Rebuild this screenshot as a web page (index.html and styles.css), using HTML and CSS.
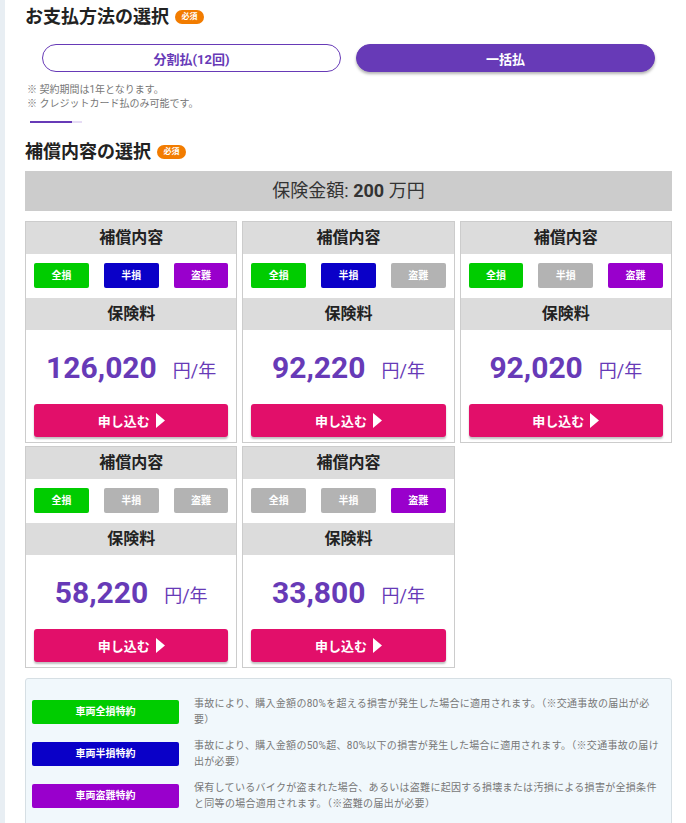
FILE: index.html
```html
<!DOCTYPE html>
<html lang="ja">
<head>
    <meta charset="UTF-8">
    <meta name="viewport" content="width=device-width, initial-scale=1.0">
    <title>お支払方法の選択</title>
    <link rel="stylesheet" href="styles.css">
</head>
<body>
    <div class="page">
        <div class="side"></div>

        <div class="main">
            <h2 class="section-title">お支払方法の選択 <span class="badge">必須</span></h2>

            <div class="pay-options">
                <button class="pay-button">分割払(12回)</button>
                <button class="pay-button active">一括払</button>
            </div>

            <div class="notes">
                <p>※ 契約期間は1年となります。</p>
                <p>※ クレジットカード払のみ可能です。</p>
            </div>

            <div class="progress"><span></span></div>

            <h2 class="section-title">補償内容の選択 <span class="badge">必須</span></h2>

            <div class="amount-bar">保険金額: <b>200</b> 万円</div>

            <div class="plans">
                <div class="plan">
                    <div class="plan-head">補償内容</div>
                    <div class="tags">
                        <span class="tag green">全損</span>
                        <span class="tag blue">半損</span>
                        <span class="tag purple">盗難</span>
                    </div>
                    <div class="plan-head">保険料</div>
                    <div class="price"><span class="num">126,020</span><span class="unit">円/年</span></div>
                    <button class="apply">申し込む <svg width="9" height="15" viewBox="0 0 9 15"><polygon points="0,0 9,7.5 0,15" fill="#fff"/></svg></button>
                </div>

                <div class="plan">
                    <div class="plan-head">補償内容</div>
                    <div class="tags">
                        <span class="tag green">全損</span>
                        <span class="tag blue">半損</span>
                        <span class="tag off">盗難</span>
                    </div>
                    <div class="plan-head">保険料</div>
                    <div class="price"><span class="num">92,220</span><span class="unit">円/年</span></div>
                    <button class="apply">申し込む <svg width="9" height="15" viewBox="0 0 9 15"><polygon points="0,0 9,7.5 0,15" fill="#fff"/></svg></button>
                </div>

                <div class="plan">
                    <div class="plan-head">補償内容</div>
                    <div class="tags">
                        <span class="tag green">全損</span>
                        <span class="tag off">半損</span>
                        <span class="tag purple">盗難</span>
                    </div>
                    <div class="plan-head">保険料</div>
                    <div class="price"><span class="num">92,020</span><span class="unit">円/年</span></div>
                    <button class="apply">申し込む <svg width="9" height="15" viewBox="0 0 9 15"><polygon points="0,0 9,7.5 0,15" fill="#fff"/></svg></button>
                </div>

                <div class="plan">
                    <div class="plan-head">補償内容</div>
                    <div class="tags">
                        <span class="tag green">全損</span>
                        <span class="tag off">半損</span>
                        <span class="tag off">盗難</span>
                    </div>
                    <div class="plan-head">保険料</div>
                    <div class="price"><span class="num">58,220</span><span class="unit">円/年</span></div>
                    <button class="apply">申し込む <svg width="9" height="15" viewBox="0 0 9 15"><polygon points="0,0 9,7.5 0,15" fill="#fff"/></svg></button>
                </div>

                <div class="plan">
                    <div class="plan-head">補償内容</div>
                    <div class="tags">
                        <span class="tag off">全損</span>
                        <span class="tag off">半損</span>
                        <span class="tag purple">盗難</span>
                    </div>
                    <div class="plan-head">保険料</div>
                    <div class="price"><span class="num">33,800</span><span class="unit">円/年</span></div>
                    <button class="apply">申し込む <svg width="9" height="15" viewBox="0 0 9 15"><polygon points="0,0 9,7.5 0,15" fill="#fff"/></svg></button>
                </div>
            </div>

            <div class="legend">
                <div class="legend-row">
                    <span class="legend-tag green">車両全損特約</span>
                    <p>事故により、購入金額の80%を超える損害が発生した場合に適用されます。（※交通事故の届出が必要）</p>
                </div>
                <div class="legend-row">
                    <span class="legend-tag blue">車両半損特約</span>
                    <p>事故により、購入金額の50%超、80%以下の損害が発生した場合に適用されます。（※交通事故の届け出が必要）</p>
                </div>
                <div class="legend-row">
                    <span class="legend-tag purple">車両盗難特約</span>
                    <p>保有しているバイクが盗まれた場合、あるいは盗難に起因する損壊または汚損による損害が全損条件と同等の場合適用されます。（※盗難の届出が必要）</p>
                </div>
            </div>
        </div>
    </div>
</body>
</html>
```

FILE: styles.css
```css
body {
    margin: 0;
    padding: 0;
    background-color: #fff;
    font-family: Roboto, "Noto Sans CJK JP", sans-serif;
    color: #222;
}

.page {
    display: flex;
    min-height: 823px;
}

.side {
    width: 5px;
    background-color: #e8eef3;
    flex-shrink: 0;
}

.main {
    flex: 1;
    padding: 0 14px 0 20px;
}

.section-title {
    display: flex;
    align-items: center;
    gap: 6px;
    margin: 5px 0 0;
    font-size: 18px;
    line-height: 24px;
    font-weight: bold;
    color: #222;
}

.section-title + .amount-bar {
    margin-top: 7px;
}

.badge {
    display: inline-block;
    width: 29px;
    height: 14px;
    line-height: 14px;
    border-radius: 7px;
    background-color: #f27c00;
    color: #fff;
    font-size: 8px;
    font-weight: bold;
    text-align: center;
}

.pay-options {
    display: flex;
    gap: 15px;
    margin-top: 15px;
    padding: 0 17px;
}

.pay-button {
    flex: 1;
    height: 28px;
    border-radius: 14px;
    border: 1.5px solid #673ab7;
    background-color: #fff;
    color: #673ab7;
    font-family: Roboto, "Noto Sans CJK JP", sans-serif;
    font-size: 13px;
    font-weight: bold;
    cursor: pointer;
}

.pay-button.active {
    background-color: #673ab7;
    color: #fff;
    box-shadow: 0 2px 3px rgba(0, 0, 0, 0.3);
}

.notes {
    margin-top: 11px;
    padding-left: 2px;
}

.notes p {
    margin: 0;
    font-size: 10px;
    line-height: 14px;
    color: #777;
}

.progress {
    width: 52px;
    height: 2px;
    margin: 10px 0 0 5px;
    background-color: #e6dcf5;
}

.progress span {
    display: block;
    width: 42px;
    height: 2px;
    background-color: #673ab7;
}

.progress + .section-title {
    margin-top: 17px;
}

.amount-bar {
    height: 40px;
    line-height: 40px;
    background-color: #ccc;
    text-align: center;
    font-size: 18px;
    color: #333;
}

.plans {
    display: grid;
    grid-template-columns: repeat(3, 1fr);
    column-gap: 5px;
    row-gap: 3px;
    margin-top: 10px;
}

.plan {
    display: flex;
    flex-direction: column;
    border: 1px solid #ccc;
    height: 222px;
    box-sizing: border-box;
}

.plan-head {
    height: 32px;
    line-height: 32px;
    background-color: #dcdcdc;
    text-align: center;
    font-size: 16px;
    font-weight: bold;
    color: #222;
}

.tags {
    display: flex;
    gap: 15px;
    padding: 9px 8px 10px;
}

.tag {
    flex: 1;
    height: 25px;
    line-height: 25px;
    border-radius: 2px;
    color: #fff;
    font-size: 10px;
    font-weight: bold;
    text-align: center;
}

.green { background-color: #00cc00; }
.blue { background-color: #0a00c8; }
.purple { background-color: #9900cc; }
.off { background-color: #b3b3b3; }

.price {
    flex: 1;
    display: flex;
    justify-content: center;
    align-items: center;
    gap: 16px;
    color: #673ab7;
}

.price .num {
    font-size: 30px;
    font-weight: bold;
}

.price .unit {
    font-size: 18px;
    margin-top: 4px;
}

.apply {
    display: flex;
    justify-content: center;
    align-items: center;
    gap: 6px;
    height: 33px;
    margin: 0 8px 5px;
    border: none;
    border-radius: 3px;
    background-color: #e20f6a;
    color: #fff;
    font-family: Roboto, "Noto Sans CJK JP", sans-serif;
    font-size: 13px;
    font-weight: bold;
    box-shadow: 0 2px 2px rgba(0, 0, 0, 0.25);
    cursor: pointer;
}

.legend {
    margin-top: 10px;
    padding: 17px 12px 20px 6px;
    background-color: #f1f8fc;
    border: 1px solid #d6dfe4;
    border-radius: 3px;
}

.legend-row {
    display: flex;
    align-items: center;
    gap: 15px;
    margin-bottom: 10px;
}

.legend-tag {
    flex-shrink: 0;
    width: 147px;
    height: 24px;
    line-height: 24px;
    border-radius: 2px;
    color: #fff;
    font-size: 10px;
    font-weight: bold;
    text-align: center;
}

.legend-row p {
    margin: 0;
    font-size: 10px;
    line-height: 16px;
    letter-spacing: 0.3px;
    color: #777;
}
```
